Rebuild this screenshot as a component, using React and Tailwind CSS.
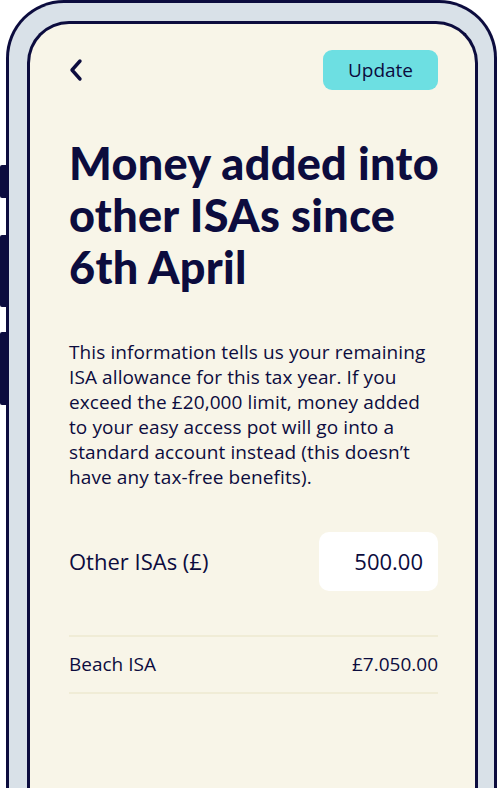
import React from "react";

export default function App() {
  const navy = "text-[#0c0c3e]";
  return (
    <div className="relative w-[500px] h-[788px] bg-white overflow-hidden">
      {/* side buttons */}
      <div className="absolute left-0 top-[165px] w-[8px] h-[33px] bg-[#0c0c3e] rounded-l-[2px]" />
      <div className="absolute left-0 top-[235px] w-[8px] h-[72px] bg-[#0c0c3e] rounded-l-[2px]" />
      <div className="absolute left-0 top-[332px] w-[8px] h-[73px] bg-[#0c0c3e] rounded-l-[2px]" />
      <div className="relative ml-[6px] w-[491px] h-[790px] border-[3px] border-b-0 border-[#0c0c3e] rounded-t-[58px] bg-[#d9e1e8] pl-[18px] pr-[16px] pt-[18px]">
        <div className="h-full border-[3px] border-b-0 border-[#0c0c3e] rounded-t-[42px] bg-[#f8f5e8] pl-[39px] pr-[37px] pt-[26px] font-['Open_Sans',sans-serif]">
          <div className="flex items-center justify-between h-[40px]">
            <svg width="16" height="24" viewBox="0 0 16 24" className="-ml-[1px]">
              <path d="M12 3 L4 12 L12 21" fill="none" stroke="#0c0c3e" strokeWidth="3.4" strokeLinecap="round" strokeLinejoin="round" />
            </svg>
            <button className={`w-[115px] h-[40px] rounded-[9px] bg-[#6ddfe2] ${navy} text-[19px] leading-none`}>
              Update
            </button>
          </div>
          <h1 className={`mt-[47px] -mr-[10px] ${navy} text-[45px] leading-[52px] font-black tracking-[0.3px] font-['Lato',sans-serif]`}>
            Money added into other ISAs since 6th April
          </h1>
          <p className={`mt-[47px] -mr-[2px] ${navy} text-[19px] leading-[25px] tracking-[0.1px]`}>
            This information tells us your remaining ISA allowance for this tax year. If you exceed the £20,000 limit, money added to your easy access pot will go into a standard account instead (this doesn’t have any tax-free benefits).
          </p>
          <div className="mt-[42px] flex items-center justify-between">
            <span className={`${navy} text-[22px]`}>Other ISAs (£)</span>
            <div className={`w-[119px] h-[59px] rounded-[10px] bg-white flex items-center justify-end pr-[15px] ${navy} text-[22px]`}>
              500.00
            </div>
          </div>
          <div className="mt-[44px] border-t-2 border-[#f0ecd6]" />
          <div className={`h-[55px] flex items-center justify-between ${navy} text-[19px]`}>
            <span>Beach ISA</span>
            <span>£7.050.00</span>
          </div>
          <div className="border-t-2 border-[#f0ecd6]" />
        </div>
      </div>
    </div>
  );
}
